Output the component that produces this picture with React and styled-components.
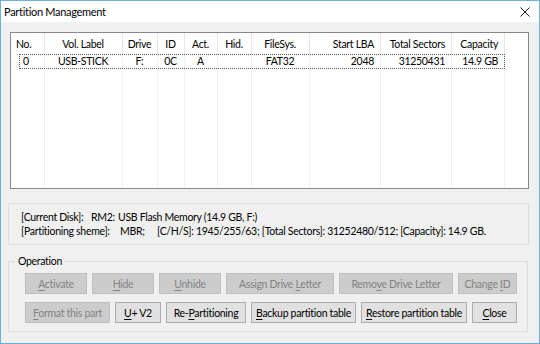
import React from 'react'
import styled, { createGlobalStyle } from 'styled-components'

const GlobalStyle = createGlobalStyle`
  html, body {
    margin: 0;
    padding: 0;
    background: #ffffff;
  }
  * { box-sizing: border-box; }
`;

const FONT = `"Segoe UI", Lato, "Noto Sans", sans-serif`;

const Window = styled.div`
  width: 540px;
  height: 344px;
  border: 1px solid #6cb0e0;
  display: flex;
  flex-direction: column;
  font-family: ${FONT};
  font-size: 10.5px;
  letter-spacing: -0.3px;
  color: #000;
  overflow: hidden;
`;

const TitleBar = styled.div`
  height: 21px;
  flex: none;
  background: #fff;
  display: flex;
  align-items: center;
  justify-content: space-between;
  padding: 0 9px 0 3px;
`;

const Title = styled.span`
  font-size: 11px;
  line-height: 16px;
`;

const Body = styled.div`
  flex: 1;
  background: #f0f0f0;
  padding: 10px 0 0 7px;
`;

const ListView = styled.div`
  margin-left: 2px;
  width: 519px;
  height: 157px;
  border: 1px solid #828790;
  background: #fff;
  overflow: hidden;
  display: flex;
  flex-direction: column;
`;

const HeaderRow = styled.div`
  display: flex;
  height: 21px;
  flex: none;
`;

const HeaderCell = styled.div`
  width: ${p => p.w}px;
  flex: none;
  border-right: 1px solid #e5e5e5;
  display: flex;
  align-items: center;
  justify-content: ${p => (p.align === 'right' ? 'flex-end' : p.align === 'left' ? 'flex-start' : 'center')};
  padding: 0 6px 0 5px;
  white-space: nowrap;
  line-height: 16px;
`;

const HeaderFill = styled.div`
  flex: 1;
`;

const Grid = styled.div`
  flex: 1;
  display: flex;
  flex-direction: column;
`;

const Row = styled.div`
  display: flex;
  height: 15px;
  flex: none;
  position: relative;
  width: max-content;
  ${p => p.focused && `
    &::after {
      content: '';
      position: absolute;
      left: 8px;
      right: 0;
      top: 0;
      bottom: 0;
      border: 1px dotted #5a5a5a;
      pointer-events: none;
    }
  `}
`;

const FillRow = styled.div`
  flex: 1;
  display: flex;
`;

const Cell = styled.div`
  width: ${p => p.w}px;
  flex: none;
  border-right: 1px solid #f0f0f0;
  display: flex;
  align-items: center;
  justify-content: ${p => (p.align === 'right' ? 'flex-end' : p.align === 'left' ? 'flex-start' : 'center')};
  padding: 0 6px 0 ${p => (p.first ? 12 : 5)}px;
  white-space: nowrap;
  line-height: 15px;
`;

const InfoBox = styled.div`
  margin-top: 14px;
  width: 521px;
  height: 42px;
  border: 1px solid #dcdcdc;
  padding: 6px 0 0 12px;
`;

const InfoLine = styled.div`
  display: flex;
  line-height: 14px;
  height: 14px;
  white-space: nowrap;
`;

const Field = styled.span`
  width: ${p => (p.w ? `${p.w}px` : 'auto')};
  flex: none;
`;

const GroupBox = styled.div`
  margin-top: 16px;
  width: 520px;
  border: 1px solid #dcdcdc;
  padding: 0 9px 8px 16px;
`;

const Legend = styled.div`
  display: table;
  margin: -9px 0 0 -10px;
  padding: 0 3px;
  background: #f0f0f0;
  line-height: 16px;
`;

const ButtonRow = styled.div`
  display: flex;
  gap: 5px;
  margin-top: ${p => p.top}px;
`;

const Button = styled.button`
  width: ${p => p.w}px;
  height: 21px;
  padding: 0;
  font-family: ${FONT};
  font-size: 10.5px;
  letter-spacing: -0.3px;
  line-height: 16px;
  white-space: nowrap;
  background: ${p => (p.disabled ? '#cccccc' : '#e1e1e1')};
  border: 1px solid ${p => (p.disabled ? '#bfbfbf' : '#adadad')};
  color: ${p => (p.disabled ? '#838383' : '#000')};
  border-radius: 0;
`;

const Key = styled.span`
  text-decoration: underline;
  text-underline-offset: 2px;
`;

const columns = [
  { key: 'no', title: 'No.', w: 34, align: 'left' },
  { key: 'label', title: 'Vol. Label', w: 78 },
  { key: 'drive', title: 'Drive', w: 35 },
  { key: 'id', title: 'ID', w: 27 },
  { key: 'act', title: 'Act.', w: 33 },
  { key: 'hid', title: 'Hid.', w: 34 },
  { key: 'fs', title: 'FileSys.', w: 58 },
  { key: 'start', title: 'Start LBA', w: 71, align: 'right' },
  { key: 'total', title: 'Total Sectors', w: 71, align: 'right' },
  { key: 'cap', title: 'Capacity', w: 53, align: 'right' },
];

const partitions = [
  { no: '0', label: 'USB-STICK', drive: 'F:', id: '0C', act: 'A', hid: '', fs: 'FAT32', start: '2048', total: '31250431', cap: '14.9 GB' },
];

// text with an underlined access key
const Label = ({ text, k }) => {
  if (k === undefined) return text
  return (
    <>
      {text.slice(0, k)}
      <Key>{text[k]}</Key>
      {text.slice(k + 1)}
    </>
  )
}

const row1 = [
  { text: 'Activate', k: 0, w: 62, disabled: true },
  { text: 'Hide', k: 0, w: 62, disabled: true },
  { text: 'Unhide', k: 0, w: 62, disabled: true },
  { text: 'Assign Drive Letter', k: 13, w: 108, disabled: true },
  { text: 'Remove Drive Letter', k: 4, w: 114, disabled: true },
  { text: 'Change ID', k: 7, w: 59, disabled: true },
];

const row2 = [
  { text: 'Format this part', k: 0, w: 85, disabled: true },
  { text: 'U+ V2', k: 0, w: 46 },
  { text: 'Re-Partitioning', k: 3, w: 80 },
  { text: 'Backup partition table', k: 0, w: 105 },
  { text: 'Restore partition table', k: 0, w: 106 },
  { text: 'Close', k: 0, w: 45 },
];

const CloseIcon = () => (
  <svg width="10" height="10" viewBox="0 0 10 10">
    <path d="M0.5 0.5 L9.5 9.5 M9.5 0.5 L0.5 9.5" stroke="#1a1a1a" strokeWidth="1" fill="none" />
  </svg>
)

export default function App() {
  return (
    <>
      <GlobalStyle />
      <Window>
        <TitleBar>
          <Title>Partition Management</Title>
          <CloseIcon />
        </TitleBar>
        <Body>
          <ListView>
            <HeaderRow>
              {columns.map(c => (
                <HeaderCell key={c.key} w={c.w} align={c.align}>{c.title}</HeaderCell>
              ))}
              <HeaderFill />
            </HeaderRow>
            <Grid>
              {partitions.map((p, i) => (
                <Row key={i} focused={i === 0}>
                  {columns.map((c, j) => (
                    <Cell key={c.key} w={c.w} align={c.align} first={j === 0}>{p[c.key]}</Cell>
                  ))}
                </Row>
              ))}
              <FillRow>
                {columns.map(c => (
                  <Cell key={c.key} w={c.w} />
                ))}
              </FillRow>
            </Grid>
          </ListView>

          <InfoBox>
            <InfoLine>
              <Field w={70}>[Current Disk]:</Field>
              <Field w={27}>RM2:</Field>
              <Field>USB Flash Memory (14.9 GB, F:)</Field>
            </InfoLine>
            <InfoLine>
              <Field w={99}>[Partitioning sheme]:</Field>
              <Field w={37}>MBR;</Field>
              <Field>[C/H/S]: 1945/255/63; [Total Sectors]: 31252480/512; [Capacity]: 14.9 GB.</Field>
            </InfoLine>
          </InfoBox>

          <GroupBox>
            <Legend>Operation</Legend>
            <ButtonRow top={4}>
              {row1.map(b => (
                <Button key={b.text} w={b.w} disabled={b.disabled}><Label text={b.text} k={b.k} /></Button>
              ))}
            </ButtonRow>
            <ButtonRow top={8}>
              {row2.map(b => (
                <Button key={b.text} w={b.w} disabled={b.disabled}><Label text={b.text} k={b.k} /></Button>
              ))}
            </ButtonRow>
          </GroupBox>
        </Body>
      </Window>
    </>
  )
}
